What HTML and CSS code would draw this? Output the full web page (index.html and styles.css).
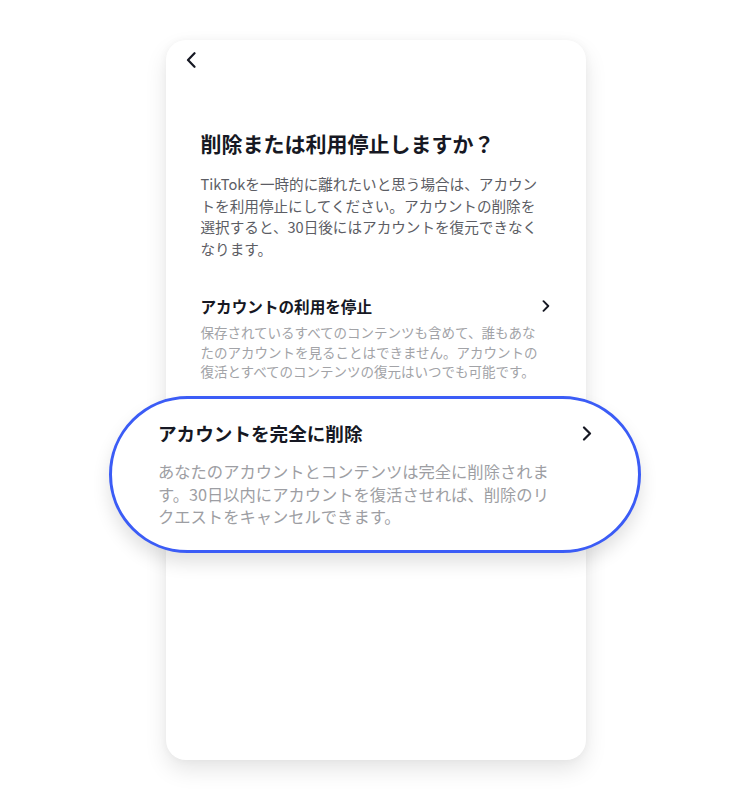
FILE: index.html
```html
<!DOCTYPE html>
<html lang="ja">
<head>
<meta charset="utf-8">
<title>削除または利用停止しますか？</title>
<link rel="stylesheet" href="styles.css">
</head>
<body>
<div class="page">
  <div class="card">
    <div class="card-header">
      <svg class="back" width="10" height="16" viewBox="0 0 10 16"><path d="M8.5 1.2 L2 8 L8.5 14.8" fill="none" stroke="#161823" stroke-width="2.2" stroke-linecap="round" stroke-linejoin="round"/></svg>
    </div>
    <div class="card-body">
      <h1 class="title">削除または利用停止しますか？</h1>
      <p class="lead">TikTokを一時的に離れたいと思う場合は、アカウントを利用停止にしてください。アカウントの削除を選択すると、30日後にはアカウントを復元できなくなります。</p>
      <div class="option">
        <div class="option-row">
          <span class="option-title">アカウントの利用を停止</span>
          <svg class="chev" width="8" height="12" viewBox="0 0 8 12"><path d="M1.5 1.2 L6.3 6 L1.5 10.8" fill="none" stroke="#161823" stroke-width="1.9" stroke-linecap="round" stroke-linejoin="round"/></svg>
        </div>
        <p class="option-desc">保存されているすべてのコンテンツも含めて、誰もあなたのアカウントを見ることはできません。アカウントの復活とすべてのコンテンツの復元はいつでも可能です。</p>
      </div>
    </div>
  </div>

  <div class="callout">
    <div class="callout-row">
      <span class="callout-title">アカウントを完全に削除</span>
      <svg class="callout-chev" width="10" height="15" viewBox="0 0 10 15"><path d="M2 1.5 L8 7.5 L2 13.5" fill="none" stroke="#161823" stroke-width="2.2" stroke-linecap="round" stroke-linejoin="round"/></svg>
    </div>
    <p class="callout-desc">あなたのアカウントとコンテンツは完全に削除されます。30日以内にアカウントを復活させれば、削除のリクエストをキャンセルできます。</p>
  </div>
</div>
</body>
</html>
```

FILE: styles.css
```css
* { box-sizing: border-box; }

html, body {
  margin: 0;
  padding: 0;
  background: #ffffff;
}

body {
  font-family: "Noto Sans CJK JP", "Noto Sans", sans-serif;
  color: #161823;
}

.page {
  position: relative;
  width: 751px;
  height: 800px;
  padding-top: 40px;
  display: flex;
  justify-content: center;
  align-items: flex-start;
}

.card {
  width: 420px;
  height: 720px;
  background: #ffffff;
  border-radius: 20px;
  box-shadow: 0 10px 22px rgba(0, 0, 0, 0.10), 0 0 8px rgba(0, 0, 0, 0.04);
  display: flex;
  flex-direction: column;
}

.card-header {
  padding: 12px 0 0 20px;
  height: 28px;
}

.back { display: block; }

.card-body {
  padding: 0 35px;
  display: flex;
  flex-direction: column;
}

.title {
  margin: 60px 0 0;
  font-size: 21px;
  line-height: 30px;
  font-weight: 700;
  color: #161823;
}

.lead {
  margin: 15px 0 0;
  max-width: 345px;
  font-size: 14.6px;
  line-height: 21.5px;
  color: #5c5d64;
}

.option {
  margin-top: 36px;
}

.option-row {
  display: flex;
  justify-content: space-between;
  align-items: center;
  height: 22px;
}

.option-title {
  font-size: 15.6px;
  line-height: 22px;
  font-weight: 700;
}

.chev {
  margin-right: 1px;
  display: block;
}

.option-desc {
  margin: 6px 0 0;
  max-width: 347px;
  font-size: 13.5px;
  line-height: 19.5px;
  color: #a2a3a7;
}

.callout {
  position: absolute;
  left: 109px;
  top: 396px;
  width: 532px;
  height: 157px;
  background: #ffffff;
  border: 3.5px solid #3b5cf6;
  border-radius: 80px;
  box-shadow: 0 10px 18px rgba(0, 0, 0, 0.12);
  padding: 21px 46px 0 46px;
}

.callout-row {
  display: flex;
  justify-content: space-between;
  align-items: center;
  height: 26px;
}

.callout-title {
  font-size: 18.6px;
  line-height: 26px;
  font-weight: 700;
}

.callout-chev { display: block; }

.callout-desc {
  margin: 14px 0 0;
  max-width: 400px;
  font-size: 16.3px;
  line-height: 22.5px;
  color: #9d9ea3;
}
```
